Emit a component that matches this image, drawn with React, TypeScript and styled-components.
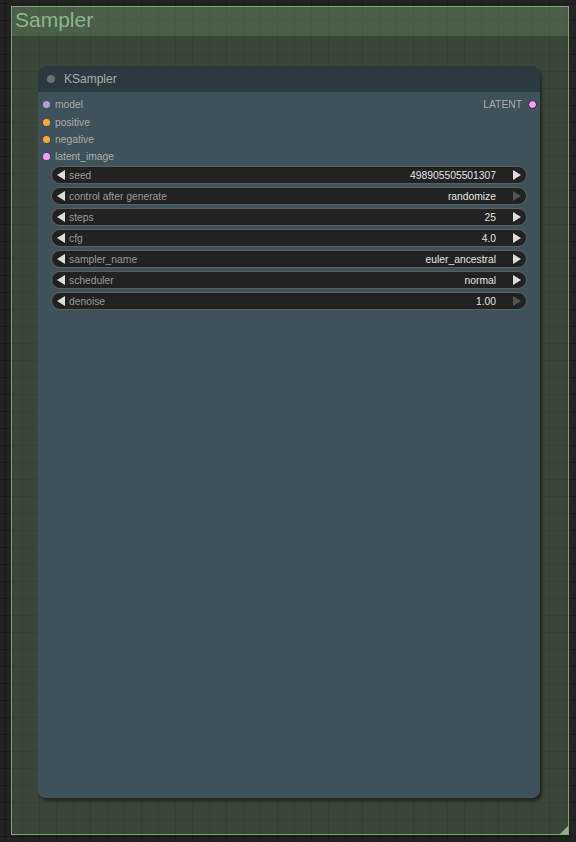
import React from "react";
import styled, { createGlobalStyle } from "styled-components";

const Global = createGlobalStyle`
  html, body { margin: 0; padding: 0; }
  body {
    background-color: #222;
    font-family: Arial, "Liberation Sans", sans-serif;
  }
  * { box-sizing: border-box; }
`;

const Canvas = styled.div`
  width: 576px;
  height: 842px;
  padding: 6px 7px 7px 11px;
  background-color: #222;
  background-image:
    linear-gradient(to right, rgba(0,0,0,0.22) 1px, transparent 1px),
    linear-gradient(to bottom, rgba(0,0,0,0.22) 1px, transparent 1px);
  background-size: 17px 17px;
  background-position: 5px 3px;
  overflow: hidden;
`;

const Group = styled.div`
  position: relative;
  width: 558px;
  height: 829px;
  border: 1px solid #83a07c;
  background-color: rgba(100, 130, 100, 0.38);
  display: flex;
  flex-direction: column;
`;

const GroupHeader = styled.div`
  height: 29px;
  flex: none;
  background-color: rgba(120, 160, 120, 0.28);
  color: #8db587;
  font-size: 21px;
  line-height: 26px;
  padding-left: 3px;
`;

const GroupBody = styled.div`
  flex: 1;
  padding: 30px 28px 36px 26px;
  display: flex;
`;

const Corner = styled.div`
  position: absolute;
  right: 0;
  bottom: 0;
  width: 0;
  height: 0;
  border-left: 8px solid transparent;
  border-bottom: 8px solid #8fb08a;
`;

const Node = styled.div`
  flex: 1;
  display: flex;
  flex-direction: column;
  border-radius: 8px;
  background: #3f5159;
  box-shadow: 2px 3px 3px rgba(0, 0, 0, 0.45);
  overflow: hidden;
`;

const NodeTitle = styled.div`
  height: 26px;
  flex: none;
  background: #2c3a40;
  display: flex;
  align-items: center;
  gap: 9px;
  padding-left: 9px;
  color: #aaa;
  font-size: 12px;
`;

const TitleDot = styled.span`
  width: 8px;
  height: 8px;
  border-radius: 50%;
  background: #6f6f6f;
`;

const NodeBody = styled.div`
  display: flex;
  flex-direction: column;
  padding: 4px 13px 0 5px;
`;

const SlotRow = styled.div`
  height: 17.4px;
  display: flex;
  align-items: center;
  justify-content: space-between;
`;

const Slot = styled.div<{ $out?: boolean }>`
  display: flex;
  align-items: center;
  gap: ${(p) => (p.$out ? "6px" : "5px")};
  color: #aaa;
  font-size: 10.3px;
  flex-direction: ${(p) => (p.$out ? "row-reverse" : "row")};
  margin-right: ${(p) => (p.$out ? "-10px" : "0")};
`;

const Dot = styled.span<{ $c: string; $out?: boolean }>`
  width: ${(p) => (p.$out ? "9px" : "7px")};
  height: ${(p) => (p.$out ? "9px" : "7px")};
  border-radius: 50%;
  background: ${(p) => p.$c};
  border: ${(p) => (p.$out ? "1px solid #1f1f1f" : "none")};
`;

const Widgets = styled.div`
  display: flex;
  flex-direction: column;
  gap: 3px;
  margin-top: 0.5px;
  padding-left: 8px;
`;

const Widget = styled.div`
  height: 18px;
  border-radius: 9px;
  background: #222;
  border: 1px solid #5f5f5f;
  display: flex;
  align-items: center;
  padding: 0 5px 0 5px;
  font-size: 10.3px;
`;

const ArrowL = styled.span`
  width: 0;
  height: 0;
  border-top: 5px solid transparent;
  border-bottom: 5px solid transparent;
  border-right: 8px solid #ddd;
  margin-right: 4px;
`;

const ArrowR = styled.span<{ $dim?: boolean }>`
  width: 0;
  height: 0;
  border-top: 5px solid transparent;
  border-bottom: 5px solid transparent;
  border-left: 8px solid ${(p) => (p.$dim ? "#555" : "#ddd")};
  margin-left: 17px;
`;

const Label = styled.span`
  color: #999;
  flex: 1;
`;

const Value = styled.span`
  color: #e4e4e4;
`;

const inputs = [
  { name: "model", color: "#b39ddb" },
  { name: "positive", color: "#ffa931" },
  { name: "negative", color: "#ffa931" },
  { name: "latent_image", color: "#ff9cf9" },
];

const widgets = [
  { label: "seed", value: "498905505501307" },
  { label: "control after generate", value: "randomize", dim: true },
  { label: "steps", value: "25" },
  { label: "cfg", value: "4.0" },
  { label: "sampler_name", value: "euler_ancestral" },
  { label: "scheduler", value: "normal" },
  { label: "denoise", value: "1.00", dim: true },
];

export default function App() {
  return (
    <>
      <Global />
      <Canvas>
        <Group>
          <GroupHeader>Sampler</GroupHeader>
          <GroupBody>
            <Node>
              <NodeTitle>
                <TitleDot />
                KSampler
              </NodeTitle>
              <NodeBody>
                {inputs.map((s, i) => (
                  <SlotRow key={s.name}>
                    <Slot>
                      <Dot $c={s.color} />
                      {s.name}
                    </Slot>
                    {i === 0 && (
                      <Slot $out>
                        <Dot $c="#ff9cf9" $out />
                        LATENT
                      </Slot>
                    )}
                  </SlotRow>
                ))}
                <Widgets>
                  {widgets.map((w) => (
                    <Widget key={w.label}>
                      <ArrowL />
                      <Label>{w.label}</Label>
                      <Value>{w.value}</Value>
                      <ArrowR $dim={w.dim} />
                    </Widget>
                  ))}
                </Widgets>
              </NodeBody>
            </Node>
          </GroupBody>
          <Corner />
        </Group>
      </Canvas>
    </>
  );
}
